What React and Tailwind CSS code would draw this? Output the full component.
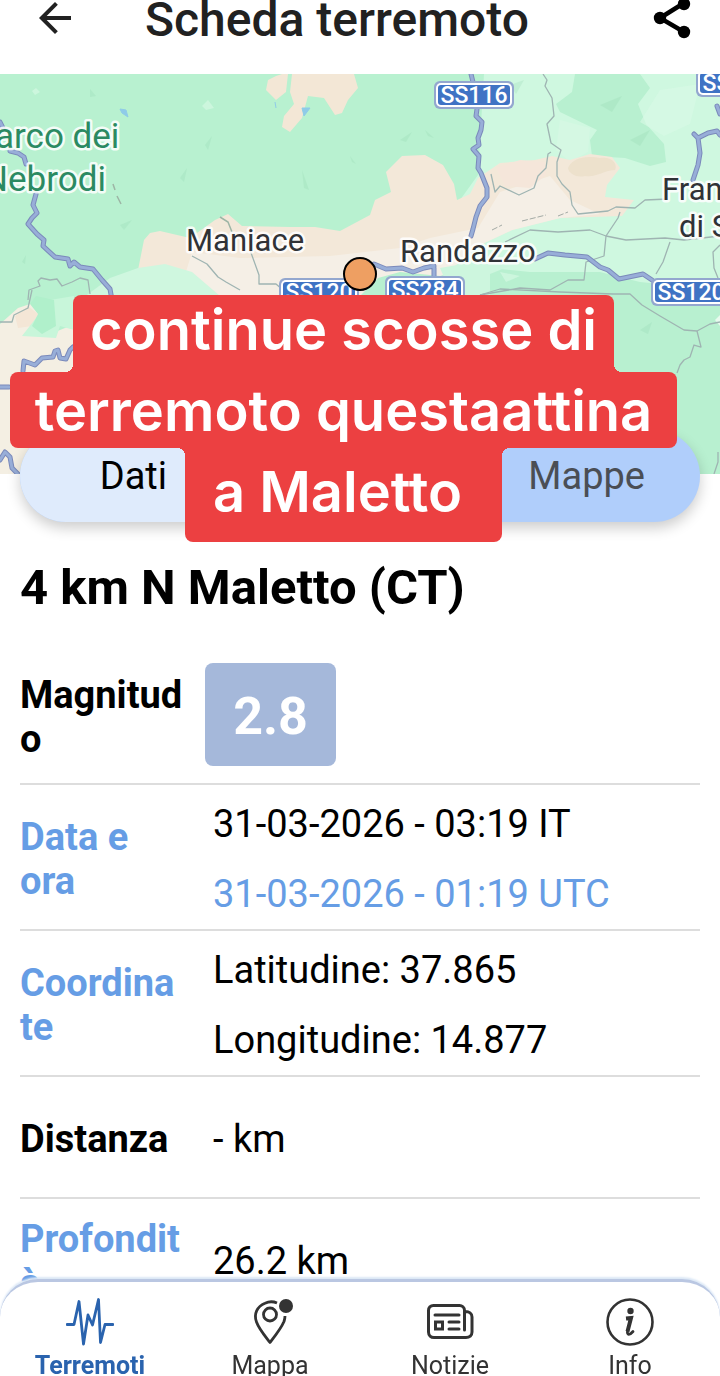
// Scheda di dettaglio di un terremoto
import { useState } from "react";
import { MdArrowBack } from "react-icons/md";

const ROADS = [
  "M0 122L3 128M10 151L18 153L24 157L26 164M36 194L33 205L37 213L32 218L28 224L37 234L44 240L43 246L55 257L68 259L70 266L74 262L80 267L93 269L102 280L110 289L112 300",
  "M471 74L473 82M477 109L476 116L482 122L481 130L478 138L479 145L473 149L479 156L478 168L481 173L487 188L487 197L480 206L476 217L473 229L471 236",
  "M374 264L386 269L402 268L413 272L424 268L434 266M434 268V284",
  "M535 259L548 253L565 255L587 257L600 267L608 270L619 279L643 274L652 280",
  "M694 134L698 138L708 133L717 131L720 135M698 138L700 153L698 165L693 180M717 106L720 114",
  "M23 371L24 361L35 365L42 358L53 357L55 351L58 350L60 358L66 359L70 350L73 347",
  "M0 387L9 387M0 460L5 452L10 457L12 468L18 474",
];

const PATHS = [
  "M28 300L29 290L40 286L38 281L41 278L50 280L57 279L62 286L72 282L80 278L88 280L90 294",
  "M192 256L207 264L218 277L226 282L240 290",
  "M250 250L259 275L259 284L276 284L283 290",
  "M543 74L547 80L545 86L552 98L554 116L547 124L551 143L561 150L557 162L557 176L562 184L570 192L572 205L578 214L608 211L616 207L635 208L645 200L668 199",
  "M551 152L548 154L546 168L538 176L534 188L519 195L500 186L495 192L491 174",
  "M505 242L530 230L558 232L590 230L606 236L626 240L665 238L684 240L720 236",
  "M620 212L618 218L612 227L606 236L604 256L586 262L584 280L568 280L550 290L520 288L480 295",
  "M670 242L663 262L656 274M720 245L713 252L714 268L718 278",
  "M480 295L500 289L560 292L613 294L630 294L642 305L660 316L684 330L697 331L710 324L720 322",
  "M697 331L701 347L694 345L690 357L684 360L680 365L677 373M714 474L718 462L718 452",
  "M0 322L12 322L14 315L28 308L32 290",
];

const PLACES = [
  { name: "arco dei", x: -5, y: 148, kind: "park" },
  { name: "Nebrodi", x: -17, y: 191, kind: "park" },
  { name: "Maniace", x: 186, y: 251, kind: "town" },
  { name: "Randazzo", x: 400, y: 262, kind: "town" },
  { name: "Francavilla", x: 662, y: 200, kind: "town" },
  { name: "di Sicilia", x: 679, y: 237, kind: "town" },
];

const SHIELDS = [
  { name: "SS116", x: 434, y: 81 },
  { name: "SS575", x: 696, y: 69 },
  { name: "SS120", x: 279, y: 278 },
  { name: "SS284", x: 385, y: 276 },
  { name: "SS120", x: 651, y: 278 },
];

function QuakeMap() {
  return (
    <svg
      viewBox="0 74 720 400"
      preserveAspectRatio="xMidYMid slice"
      className="block h-full w-full font-['Roboto',sans-serif]"
      role="img"
      aria-label="Mappa dell'epicentro"
    >
      <rect y="74" width="720" height="400" fill="#b8f1d0" />

      {/* zone chiare */}
      <path d="M484 74H720V300H470L440 240L460 200L478 175Z" fill="#cff8e0" />
      <path d="M575 74H640L650 88L638 104L646 124L664 144L666 162L650 166L625 158L592 156L590 140L597 130L560 112L556 104L572 92Z" fill="#b8f0d0" />
      <path d="M560 120L590 128L588 152L570 162L556 150Z" fill="#d5f8e3" />

      {/* terreno */}
      <path d="M138 270L144 240L150 233L160 231L190 238L215 220L228 214L242 226L290 227L315 227L340 231L370 215L375 200L391 192L386 172L402 156L425 155L443 165L454 184L457 200L470 194L478 178L500 163L535 160L552 156L570 160L590 154L612 157L620 168L607 185L605 197L634 200L622 216L560 218L512 230L480 245L450 270L440 296H215L185 275Z" fill="#f3e8d9" />
      <path d="M192 252L240 258L330 256L400 248L430 238L478 228L500 192L550 176L570 200L600 214L560 218L512 230L480 245L450 270L440 296H215L185 275Z" fill="#f5efe6" />
      <path d="M496 168L520 160L545 162L546 175L530 188L505 186Z" fill="#f5e6da" />
      <path d="M568 168C572 158 586 155 600 158C612 156 618 164 615 170C604 170 596 178 585 176C577 178 569 174 568 168Z" fill="#ebdfc8" opacity="0.8" />
      <path d="M80 300L110 278L138 268L165 264L192 272L220 296Z" fill="#cff7df" />
      <path d="M282 74H288L286 92L276 100L266 90L268 80L276 76ZM292 74H354L358 88L348 100L342 113L335 115L324 98L308 96L302 118L290 132L282 127L284 116L294 104L290 92Z" fill="#f3e7d6" />
      <path d="M360 296L378 278L400 272L440 276L460 270L490 268L530 272L600 272L640 282L720 290V474H360Z" fill="#b8f0d0" />
      <path d="M440 268L474 262L510 266L490 274L490 296H452Z" fill="#cdf6de" />
      <path d="M715 320L720 315V326Z" fill="#e8faee" />

      {/* angolo sud-ovest */}
      <path d="M0 324L18 308L36 302L42 318L50 334L70 326L80 296V474H0Z" fill="#f4efe3" />
      <path d="M15 316L28 306L38 314L32 326L18 328Z" fill="#f4e6d6" />
      <path d="M50 300L74 296V330L60 326L56 338L22 336L36 318Z" fill="#c8f6da" />
      <path d="M36 296L54 300L56 326L42 334L32 326L38 314L30 304Z" fill="#b0f0cb" />

      {/* rilievi */}
      <g fill="#8fd3ac" opacity="0.22">
        <path d="M90 89L96 96L90 97ZM205 145L212 136L208 150ZM180 178L187 168L184 182ZM120 225L132 220L124 230ZM302 170L309 190L304 188ZM350 156L356 164L352 162ZM425 130L434 138L428 136ZM400 140L412 132L406 142ZM22 262L26 255L25 264ZM640 420L660 408L650 424ZM640 330L652 322L648 334Z" />
        <path d="M600 105L622 96L612 112ZM630 140L650 130L640 146ZM510 85L524 80L516 94Z" />
      </g>
      <g fill="#d8fae6">
        <path d="M36 88L40 92L35 95L32 91ZM208 100L214 108L206 110L202 106ZM660 90L700 84L690 124L664 136L640 122ZM500 272L520 276L506 282Z" opacity="0.6" />
      </g>
      <path d="M120 109L126 110L128 117L122 113ZM302 108L310 108L304 116ZM275 102L276 108" fill="#8fcbe8" stroke="#8fcbe8" />

      {/* strade secondarie */}
      {PATHS.map((d) => (
        <path key={d} d={d} fill="none" stroke="#9fb4b2" strokeWidth="1.3" strokeLinejoin="round" />
      ))}
      <path d="M492 230L502 225M522 221L546 215M558 216L568 212" stroke="#a3aaa5" strokeDasharray="6 2" />
      <path d="M220 217L228 222L232 232M113 184L115 190M117 196L121 204" fill="none" stroke="#9db5a5" strokeWidth="1.5" />

      {/* strade statali */}
      {ROADS.map((d) => (
        <g key={d} fill="none" strokeLinejoin="round" strokeLinecap="round">
          <path d={d} stroke="#7b8abb" strokeWidth="5" />
          <path d={d} stroke="#98aed8" strokeWidth="3" />
        </g>
      ))}

      {SHIELDS.map((s) => (
        <g key={s.name + s.x}>
          <rect x={s.x} y={s.y} width="80" height="28" rx="6" fill="#93a7cf" />
          <rect x={s.x + 2} y={s.y + 2} width="76" height="24" rx="5" fill="#fff" />
          <rect x={s.x + 4} y={s.y + 4} width="72" height="20" rx="3" fill="#3f73c4" />
          <text x={s.x + 40} y={s.y + 22} textAnchor="middle" fontSize="23" fontWeight="500" fill="#fff">
            {s.name}
          </text>
        </g>
      ))}

      {PLACES.map((p) => (
        <text
          key={p.name}
          x={p.x}
          y={p.y}
          fontSize={p.kind === "park" ? 35 : 31}
          fill={p.kind === "park" ? "#2b8a62" : "#303236"}
          stroke="#fff"
          strokeOpacity="0.85"
          strokeWidth="5"
          strokeLinejoin="round"
          paintOrder="stroke"
        >
          {p.name}
        </text>
      ))}

      <circle cx="360" cy="274" r="16" fill="#ee9f62" stroke="#000" strokeWidth="2" />
    </svg>
  );
}

function Caption() {
  return (
    <div className="absolute left-[10px] top-[295px] z-20 flex w-[667px] flex-col items-center whitespace-nowrap font-['Inter',sans-serif] text-[56px] font-semibold leading-[68px] text-white">
      <p className="relative w-[541px] rounded-t-lg bg-[#ec4041] pb-2 pt-px text-center">
        continue scosse di
        <i className="absolute -left-2 bottom-0 size-2 bg-[radial-gradient(circle_at_0_0,transparent_8px,#ec4041_8px)]" />
        <i className="absolute -right-2 bottom-0 size-2 bg-[radial-gradient(circle_at_100%_0,transparent_8px,#ec4041_8px)]" />
      </p>
      <p className="w-full rounded-lg bg-[#ec4041] pb-[3px] pt-[5px] text-center">terremoto questaattina</p>
      <p className="relative w-[317px] rounded-b-lg bg-[#ec4041] pb-4 pr-3 pt-[10px] text-center">
        a Maletto
        <i className="absolute -left-2 top-0 size-2 bg-[radial-gradient(circle_at_0_100%,transparent_8px,#ec4041_8px)]" />
        <i className="absolute -right-2 top-0 size-2 bg-[radial-gradient(circle_at_100%_100%,transparent_8px,#ec4041_8px)]" />
      </p>
    </div>
  );
}

function Row({ label, blue, children }) {
  return (
    <tr className="h-[122px] border-b-2 border-[#dddddd]">
      <th
        scope="row"
        className={`break-words pr-5 pt-1 text-left align-middle font-bold leading-[44px] ${
          blue ? "text-[#669de5]" : "text-black"
        }`}
      >
        {label}
      </th>
      <td className="pl-2 pt-1 align-middle leading-[70px]">{children}</td>
    </tr>
  );
}

function ShareIcon() {
  return (
    <svg viewBox="0 0 48 48" className="size-12" fill="currentColor">
      <path d="M36 9L12 24L36 38" fill="none" stroke="currentColor" strokeWidth="4.500" />
      <circle cx="36" cy="10" r="6.200" />
      <circle cx="12" cy="24" r="6.200" />
      <circle cx="36" cy="38" r="6.200" />
    </svg>
  );
}

function WaveIcon() {
  return (
    <svg viewBox="0 0 48 48" className="size-12" fill="none" stroke="currentColor" strokeWidth="2.8" strokeLinejoin="round" strokeLinecap="round">
      <path d="M1 26.500H8L13 3.500L17.500 46L22 17L26.500 27L32.500 1.500L34.500 44.500L39 26.500H47" />
    </svg>
  );
}

function PinIcon() {
  return (
    <svg viewBox="0 0 48 48" className="size-12" fill="none" stroke="currentColor" strokeWidth="2.8">
      <path d="M31 5C28 3.700 23 3.400 19 5.200C11 8.500 7.500 16 10.500 24C13 31 19 38 24 44.500C29 38 35 30.500 38 23.500C38.500 22 39 20 39 18" strokeLinejoin="round" />
      <circle cx="24" cy="16.500" r="6.500" />
      <circle cx="40" cy="8" r="7" fill="currentColor" stroke="none" />
    </svg>
  );
}

function NewsIcon() {
  return (
    <svg viewBox="0 0 48 48" className="size-12" fill="none" stroke="currentColor" strokeWidth="3" strokeLinecap="round">
      <path d="M38.500 32V12.500C38.500 9.500 36 7.500 33.500 7.500H7.500C4.500 7.500 2.500 9.500 2.500 12.500V34C2.500 37.500 5 39.500 8 39.500H40C43.500 39.500 46 37.500 46 34V19C46 15.500 43 13.500 39.500 13.500" />
      <path d="M9 17H33M23 24H33M23 31H33" />
      <rect x="9.500" y="24" width="7" height="7" />
    </svg>
  );
}

function InfoIcon() {
  return (
    <svg viewBox="0 0 48 48" className="size-12" fill="none" stroke="currentColor" strokeWidth="2.6">
      <circle cx="24" cy="24" r="22.500" />
      <circle cx="24.500" cy="13" r="3.200" fill="currentColor" stroke="none" />
      <path d="M20 20.500L25 20L21.500 33.500" strokeWidth="4" />
      <path d="M21.500 33.500C21 37 23.500 37.500 27 33.500" strokeWidth="2.800" strokeLinecap="round" />
    </svg>
  );
}

const NAV = [
  { label: "Terremoti", icon: WaveIcon },
  { label: "Mappa", icon: PinIcon },
  { label: "Notizie", icon: NewsIcon },
  { label: "Info", icon: InfoIcon },
];

export default function App() {
  const [tab, setTab] = useState("Dati");
  const [page, setPage] = useState("Terremoti");

  return (
    <div className="relative flex h-screen flex-col overflow-hidden bg-white font-['Roboto',sans-serif] text-[38px] text-black">
      <header className="flex h-[74px] shrink-0 items-center pb-[38px] pl-[31px] pr-6 text-[#212121]">
        <button type="button" aria-label="Indietro" className="shrink-0">
          <MdArrowBack className="size-12" />
        </button>
        <h1 className="ml-[66px] flex-1 pt-1 text-[48px] font-medium leading-[48px]">Scheda terremoto</h1>
        <button type="button" aria-label="Condividi" className="shrink-0 text-black">
          <ShareIcon />
        </button>
      </header>

      <div className="h-[400px] shrink-0">
        <QuakeMap />
      </div>

      <div className="relative mx-5 -mt-11 grid h-[92px] shrink-0 grid-cols-3 overflow-hidden rounded-full bg-[#b0cefb] shadow-[0_6px_14px_rgba(0,0,0,0.2)]">
        <button type="button" onClick={() => setTab("Dati")} className={tab === "Dati" ? "bg-[#dfebfc]" : "text-[#4a4e55]"}>
          Dati
        </button>
        <button type="button" onClick={() => setTab("Mappe")} className={`col-start-3 ${tab === "Mappe" ? "bg-[#dfebfc]" : "text-[#4a4e55]"}`}>
          Mappe
        </button>
      </div>

      <Caption />

      <main className="px-5 pt-9">
        <h2 className="text-[49px] font-bold leading-[60px]">4 km N Maletto (CT)</h2>
        <table className="mt-7 w-full table-fixed border-collapse">
          <colgroup>
            <col className="w-[185px]" />
            <col />
          </colgroup>
          <tbody>
            <tr className="h-[138px] border-b-2 border-[#dddddd]">
              <th scope="row" className="break-words pr-5 pt-1 text-left align-middle font-bold leading-[44px]">
                Magnitudo
              </th>
              <td className="align-middle">
                <span className="flex h-[103px] w-[131px] items-center justify-center rounded-lg bg-[#a5b8da] pt-1 text-[52px] font-bold text-white">
                  2.8
                </span>
              </td>
            </tr>
            <Row label="Data e ora" blue>
              <p>31-03-2026 - 03:19 IT</p>
              <p className="text-[#669de5]">31-03-2026 - 01:19 UTC</p>
            </Row>
            <Row label="Coordinate" blue>
              <p>Latitudine: 37.865</p>
              <p>Longitudine: 14.877</p>
            </Row>
            <Row label="Distanza">- km</Row>
            <Row label="Profondità" blue>26.2 km</Row>
          </tbody>
        </table>
      </main>

      <nav className="fixed inset-x-0 bottom-0 z-10 grid h-[97px] grid-cols-4 overflow-hidden rounded-t-[38px] border-t-3 border-[#bac7e2] bg-white pt-4 text-[25px] text-[#333333] shadow-[0_-2px_2px_#dce8f6]">
        {NAV.map(({ label, icon: Icon }) => (
          <button
            key={label}
            type="button"
            onClick={() => setPage(label)}
            className={`flex flex-col items-center gap-2 leading-[24px] ${page === label ? "font-bold text-[#2a63ae]" : ""}`}
          >
            <Icon />
            {label}
          </button>
        ))}
      </nav>
    </div>
  );
}
